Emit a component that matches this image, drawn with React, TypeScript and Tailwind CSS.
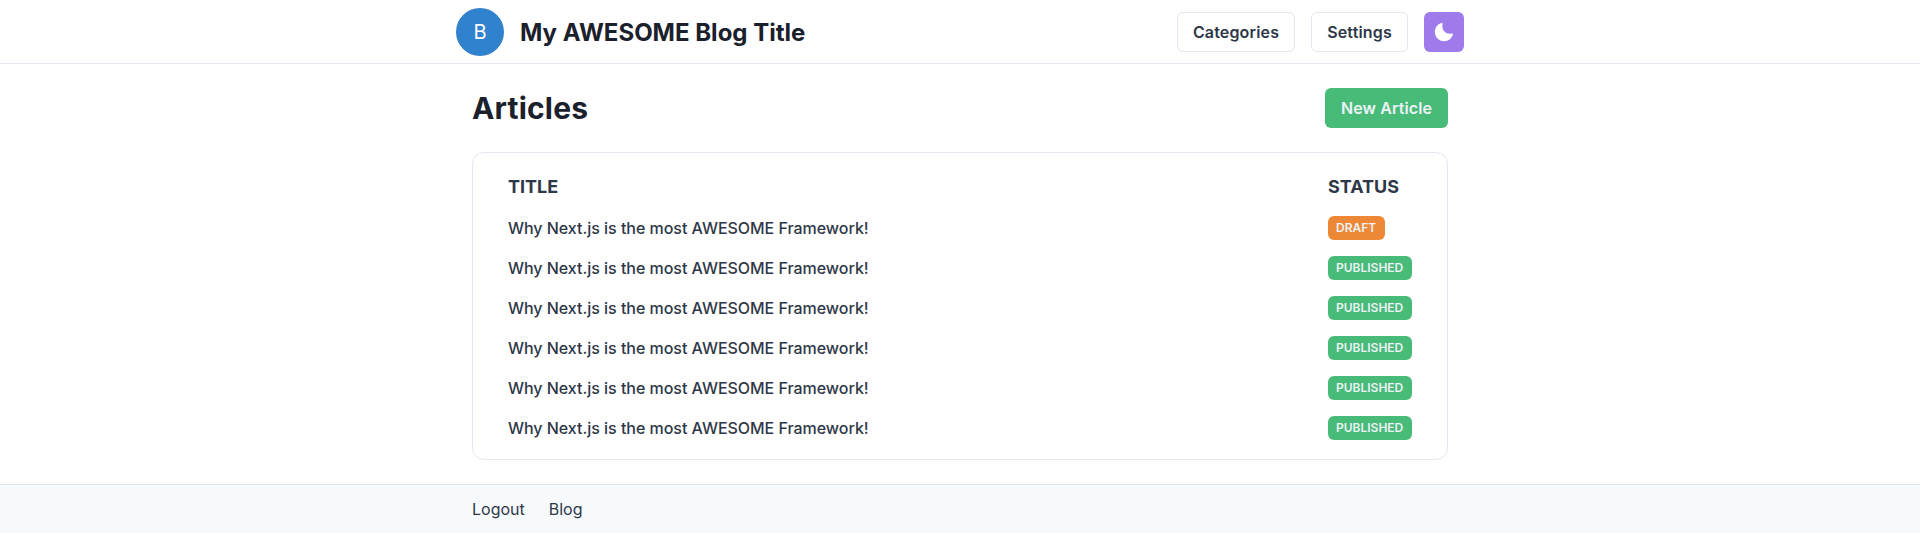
const articles = [
  { id: 1, status: 'DRAFT' },
  { id: 2, status: 'PUBLISHED' },
  { id: 3, status: 'PUBLISHED' },
  { id: 4, status: 'PUBLISHED' },
  { id: 5, status: 'PUBLISHED' },
  { id: 6, status: 'PUBLISHED' },
];

function MoonIcon() {
  return (
    <svg viewBox="0 0 24 24" className="size-5" fill="currentColor" aria-hidden="true">
      <path d="M21.4,13.7C20.6,13.9,19.8,14,19,14c-5,0-9-4-9-9c0-0.8,0.1-1.6,0.3-2.4c0.1-0.3,0-0.7-0.3-1c-0.3-0.3-0.6-0.4-1-0.3C4.3,2.7,1,7.1,1,12c0,6.1,4.9,11,11,11c4.9,0,9.3-3.3,10.6-8.1c0.1-0.3,0-0.7-0.3-1C22.1,13.7,21.7,13.6,21.4,13.7z" />
    </svg>
  );
}

function Header() {
  return (
    <header className="h-16 border-b border-[#e2e8f0]">
      <div className="mx-auto flex h-16 w-[1008px] items-center justify-between">
        <div className="flex items-center gap-4">
          <div className="flex size-12 items-center justify-center rounded-full bg-[#3182ce] text-xl text-white">
            B
          </div>
          <p className="pt-px text-2xl font-bold text-[#1a202c]">My AWESOME Blog Title</p>
        </div>
        <nav className="flex items-center gap-4">
          <button className="h-10 w-[118px] rounded-md border border-[#e2e8f0] font-semibold tracking-[0.01em]">Categories</button>
          <button className="h-10 w-[97px] rounded-md border border-[#e2e8f0] font-semibold tracking-[0.01em]">Settings</button>
          <button aria-label="Dark mode" className="flex size-10 items-center justify-center rounded-md bg-[#9f7aea] text-white">
            <MoonIcon />
          </button>
        </nav>
      </div>
    </header>
  );
}

export default function App() {
  return (
    <div className="flex h-[533px] flex-col bg-white font-['Inter',sans-serif] text-base text-[#2d3748]">
      <Header />
      <main className="mx-auto w-[976px] py-6">
        <div className="flex h-10 items-center justify-between">
          <h1 className="text-3xl font-bold tracking-[0.006em] text-[#1a202c]">Articles</h1>
          <button className="h-10 w-[123px] rounded-md bg-[#48bb78] font-semibold tracking-[0.006em] text-[#edf2f7]">New Article</button>
        </div>
        <div className="mt-6 grid h-[308px] grid-cols-[1fr_84px] grid-rows-[50px] auto-rows-[40px] content-start items-center rounded-xl border border-[#e2e8f0] px-[35px] pt-[5px]">
          <h2 className="pt-2 text-lg font-bold">TITLE</h2>
          <h2 className="pt-2 text-lg font-bold">STATUS</h2>
          {articles.map(({ id, status }) => (
            <div key={id} className="col-span-2 grid grid-cols-subgrid items-center">
              <span className="font-medium tracking-[-0.002em]">Why Next.js is the most AWESOME Framework!</span>
              <span
                className={`h-6 rounded-md px-2 text-xs leading-6 font-semibold ${
                  status === 'DRAFT' ? 'w-[57px] bg-[#ed8936] text-[#edf2f7]' : 'w-[84px] bg-[#48bb78] text-[#edf2f7]'
                }`}
              >
                {status}
              </span>
            </div>
          ))}
        </div>
      </main>
      <footer className="flex-1 border-t border-[#e2e8f0] bg-[#f7fafc]">
        <nav className="mx-auto flex h-12 w-[976px] items-center gap-6">
          <a>Logout</a>
          <a>Blog</a>
        </nav>
      </footer>
    </div>
  );
}
